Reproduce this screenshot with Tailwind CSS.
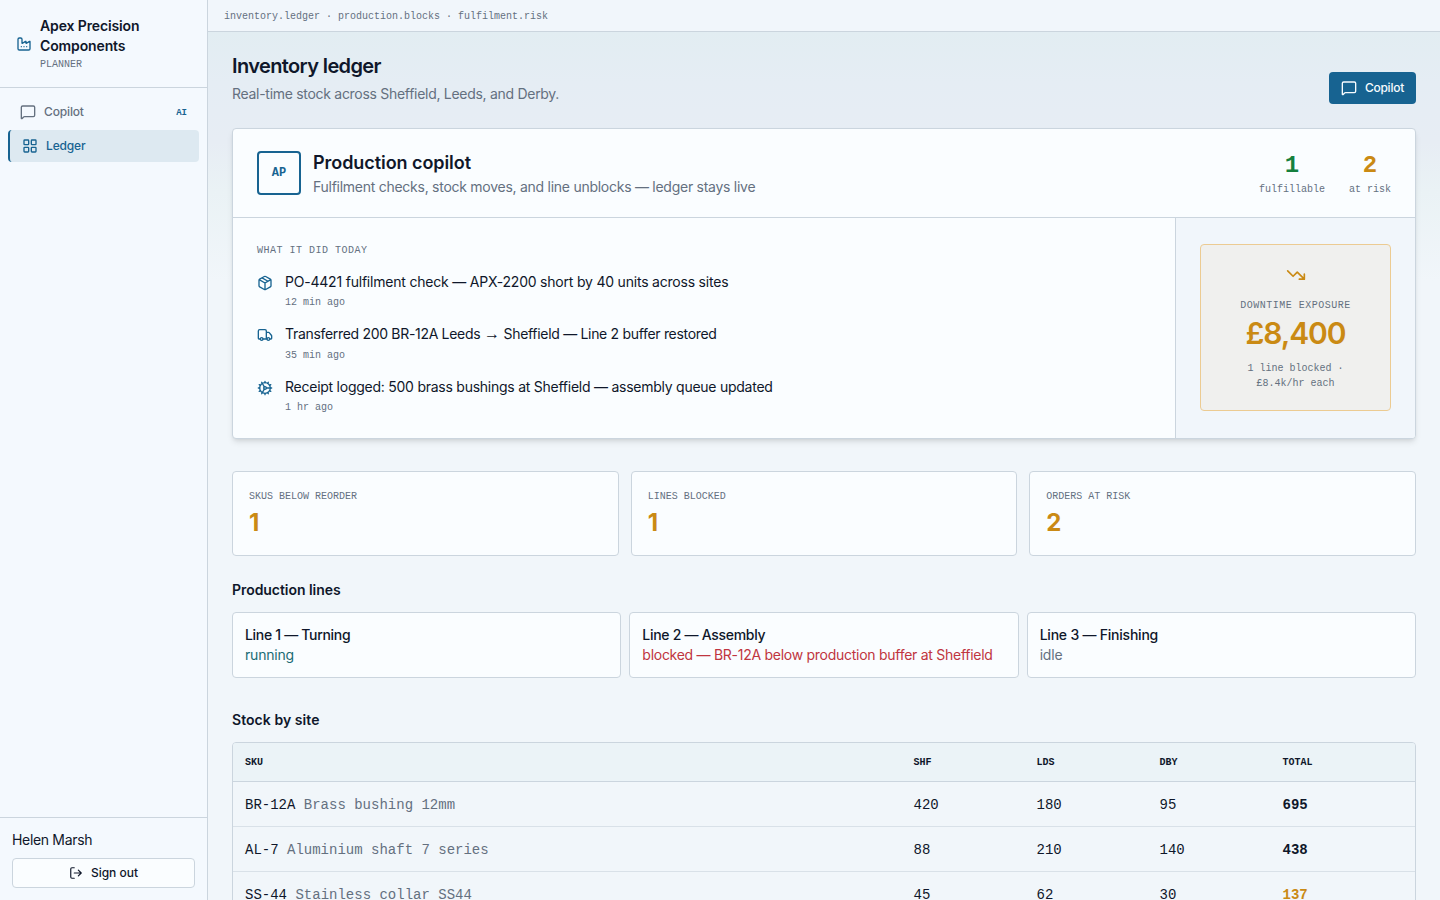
<!DOCTYPE html>
<html lang="en">
<head>
    <meta charset="UTF-8" />
    <meta name="viewport" content="width=device-width, initial-scale=1" />
    <title>Inventory ledger - Apex Precision Components</title>
    <script src="https://cdn.jsdelivr.net/npm/@tailwindcss/browser@4"></script>
</head>
<body class="h-screen overflow-hidden flex bg-[#f1f6fa] text-[#0f172a] text-sm font-['Inter','Liberation_Sans',sans-serif]">
    <aside class="w-52 shrink-0 flex flex-col bg-[#f4f9fe] border-r border-[#cbd5de]">
        <div class="flex items-center gap-2 p-4 border-b border-[#cbd5de]">
            <svg class="size-4 shrink-0 text-[#176391]" viewBox="0 0 24 24" fill="none" stroke="currentColor" stroke-width="2" stroke-linecap="round" stroke-linejoin="round"><path d="M12 16h.01M16 16h.01M8 16h.01" /><path d="M3 19a2 2 0 0 0 2 2h14a2 2 0 0 0 2-2V8.500a.5.5 0 0 0-.769-.422l-4.462 2.844A.5.5 0 0 1 15 10.500v-2a.5.5 0 0 0-.769-.422L9.770 10.922A.5.5 0 0 1 9 10.500V5a2 2 0 0 0-2-2H5a2 2 0 0 0-2 2z" /></svg>
            <div>
                <p class="font-semibold leading-5 tracking-[-0.13px]">Apex Precision<br />Components</p>
                <p class="pt-0.5 font-['Liberation_Mono',monospace] text-[10px] leading-[13px] text-[#64707f]">PLANNER</p>
            </div>
        </div>
        <nav class="flex-1 flex flex-col gap-0.5 p-2 text-xs font-medium tracking-[-0.15px]">
            <a class="flex items-center gap-2 h-8 px-3 text-[#64707f]">
                <svg class="size-4" viewBox="0 0 24 24" fill="none" stroke="currentColor" stroke-width="2" stroke-linecap="round" stroke-linejoin="round"><path d="M22 17a2 2 0 0 1-2 2H6.828a2 2 0 0 0-1.414.586l-2.202 2.202A.71.71 0 0 1 2 21.286V5a2 2 0 0 1 2-2h16a2 2 0 0 1 2 2z" /></svg>
                Copilot
                <span class="ml-auto pt-0.5 font-['Liberation_Mono',monospace] text-[9px] font-bold tracking-normal text-[#176391]">AI</span>
            </a>
            <a class="flex items-center gap-2 h-8 px-3 rounded border-l-2 border-[#176391] bg-[#dde9f1] text-[#176391]">
                <svg class="size-4" viewBox="0 0 24 24" fill="none" stroke="currentColor" stroke-width="2" stroke-linecap="round" stroke-linejoin="round"><rect width="7" height="7" x="3" y="3" rx="1" /><rect width="7" height="7" x="14" y="3" rx="1" /><rect width="7" height="7" x="14" y="14" rx="1" /><rect width="7" height="7" x="3" y="14" rx="1" /></svg>
                Ledger
            </a>
        </nav>
        <div class="p-3 border-t border-[#cbd5de]">
            <p class="leading-5 tracking-[-0.33px]">Helen Marsh</p>
            <button class="mt-2 w-full h-[30px] flex items-center justify-center gap-2 rounded border border-[#cbd5de] bg-[#fafdff] text-xs font-medium">
                <svg class="size-3.5" viewBox="0 0 24 24" fill="none" stroke="currentColor" stroke-width="2" stroke-linecap="round" stroke-linejoin="round"><path d="m16 17 5-5-5-5M21 12H9M9 21H5a2 2 0 0 1-2-2V5a2 2 0 0 1 2-2h4" /></svg>
                Sign out
            </button>
        </div>
    </aside>

    <div class="flex-1 min-w-0 flex flex-col">
        <header class="h-8 shrink-0 flex items-center px-4 pt-px border-b border-[#cbd5de] bg-[#f1f6fb] font-['Liberation_Mono',monospace] text-[10px] leading-[15px] text-[#64707f]">
            inventory.ledger · production.blocks · fulfilment.risk
        </header>
        <main class="flex-1 min-h-0 overflow-hidden px-6 pt-5 bg-[linear-gradient(to_bottom,#e2edf2_0px,#e5edf4_50px,#e7edf4_110px,#eaf2f5_160px,#f1f6fa_250px)]">
            <div class="flex items-end justify-between">
                <div>
                    <h1 class="text-xl leading-7 font-semibold tracking-[-0.62px]">Inventory ledger</h1>
                    <p class="mt-1 leading-5 tracking-[-0.29px] text-[#64707f]">Real-time stock across Sheffield, Leeds, and Derby.</p>
                </div>
                <button class="flex items-center gap-2 h-8 px-3 rounded bg-[#176391] text-[#f8fcff] text-xs font-medium tracking-[-0.25px]">
                    <svg class="size-4" viewBox="0 0 24 24" fill="none" stroke="currentColor" stroke-width="2" stroke-linecap="round" stroke-linejoin="round"><path d="M22 17a2 2 0 0 1-2 2H6.828a2 2 0 0 0-1.414.586l-2.202 2.202A.71.71 0 0 1 2 21.286V5a2 2 0 0 1 2-2h16a2 2 0 0 1 2 2z" /></svg>
                    Copilot
                </button>
            </div>

            <section class="mt-6 h-[311px] flex flex-col overflow-hidden rounded border border-[#cbd5de] bg-[#fafdff] shadow-md">
                <div class="h-[89px] shrink-0 flex items-center justify-between px-6 border-b border-[#cbd5de]">
                    <div class="flex items-center gap-3">
                        <div class="size-11 flex items-center justify-center rounded border-2 border-[#176391] font-['Liberation_Mono',monospace] text-xs font-bold text-[#176391]">AP</div>
                        <div>
                            <h2 class="text-lg leading-7 font-semibold tracking-[-0.06px]">Production copilot</h2>
                            <p class="leading-5 tracking-[-0.265px] text-[#64707f]">Fulfilment checks, stock moves, and line unblocks — ledger stays live</p>
                        </div>
                    </div>
                    <div class="flex gap-6 text-center font-['Liberation_Mono',monospace]">
                        <div>
                            <p class="text-2xl leading-8 font-bold text-[#15803d]">1</p>
                            <p class="text-[10px] leading-[15px] text-[#64707f]">fulfillable</p>
                        </div>
                        <div>
                            <p class="text-2xl leading-8 font-bold text-[#ca8a14]">2</p>
                            <p class="text-[10px] leading-[15px] text-[#64707f]">at risk</p>
                        </div>
                    </div>
                </div>
                <div class="flex-1 flex">
                    <div class="flex-1 p-6">
                        <p class="pt-0.5 font-['Liberation_Mono',monospace] text-[10px] leading-[13px] tracking-[0.5px] text-[#64707f]">WHAT IT DID TODAY</p>
                        <ul class="mt-4 flex flex-col gap-4">
                            <li class="flex gap-3">
                                <svg class="mt-0.5 size-4 shrink-0 text-[#176391]" viewBox="0 0 24 24" fill="none" stroke="currentColor" stroke-width="2" stroke-linecap="round" stroke-linejoin="round"><path d="M11 21.730a2 2 0 0 0 2 0l7-4A2 2 0 0 0 21 16V8a2 2 0 0 0-1-1.730l-7-4a2 2 0 0 0-2 0l-7 4A2 2 0 0 0 3 8v8a2 2 0 0 0 1 1.730zM12 22V12M3.290 7 12 12l8.710-5M7.500 4.270l9 5.150" /></svg>
                                <div>
                                    <p class="leading-[18px] tracking-[-0.21px]">PO-4421 fulfilment check — APX-2200 short by 40 units across sites</p>
                                    <p class="pt-[5.25px] font-['Liberation_Mono',monospace] text-[10px] leading-[13px] text-[#64707f]">12 min ago</p>
                                </div>
                            </li>
                            <li class="flex gap-3">
                                <svg class="mt-0.5 size-4 shrink-0 text-[#176391]" viewBox="0 0 24 24" fill="none" stroke="currentColor" stroke-width="2" stroke-linecap="round" stroke-linejoin="round"><path d="M14 18V6a2 2 0 0 0-2-2H4a2 2 0 0 0-2 2v11a1 1 0 0 0 1 1h2M15 18H9M19 18h2a1 1 0 0 0 1-1v-3.650a1 1 0 0 0-.22-.624l-3.480-4.350A1 1 0 0 0 17.520 8H14" /><circle cx="17" cy="18" r="2" /><circle cx="7" cy="18" r="2" /></svg>
                                <div>
                                    <p class="leading-[18px] tracking-[-0.31px]">Transferred 200 BR-12A Leeds <span class="font-['Liberation_Sans',sans-serif] text-base leading-[0] tracking-normal">→</span> Sheffield — Line 2 buffer restored</p>
                                    <p class="pt-[5.25px] font-['Liberation_Mono',monospace] text-[10px] leading-[13px] text-[#64707f]">35 min ago</p>
                                </div>
                            </li>
                            <li class="flex gap-3">
                                <svg class="mt-0.5 size-4 shrink-0 text-[#176391]" viewBox="0 0 24 24" fill="none" stroke="currentColor" stroke-width="2" stroke-linecap="round" stroke-linejoin="round"><path d="M11 10.270 7 3.340M11 13.730l-4 6.930M12 22v-2M12 2v2M14 12h8M17 20.660l-1-1.730M17 3.340l-1 1.730M2 12h2M20.660 17l-1.730-1M20.660 7l-1.730 1M3.340 17l1.730-1M3.340 7l1.730 1" /><circle cx="12" cy="12" r="2" /><circle cx="12" cy="12" r="8" /></svg>
                                <div>
                                    <p class="leading-[18px] tracking-[-0.25px]">Receipt logged: 500 brass bushings at Sheffield — assembly queue updated</p>
                                    <p class="pt-[5.25px] font-['Liberation_Mono',monospace] text-[10px] leading-[13px] text-[#64707f]">1 hr ago</p>
                                </div>
                            </li>
                        </ul>
                    </div>
                    <div class="w-60 shrink-0 flex flex-col justify-center px-6 pb-px border-l border-[#cbd5de] bg-[#f1f6fb]">
                        <div class="flex flex-col items-center px-5 pt-5 pb-[19px] rounded border border-[#eccb92] bg-[#f0f0ee] text-center">
                            <svg class="size-5 text-[#ca8a14]" viewBox="0 0 24 24" fill="none" stroke="currentColor" stroke-width="2" stroke-linecap="round" stroke-linejoin="round"><path d="M16 17h6v-6M22 17l-8.500-8.500-5 5L2 7" /></svg>
                            <p class="mt-3 pt-0.5 font-['Liberation_Mono',monospace] text-[10px] leading-[13px] tracking-[0.5px] text-[#64707f]">DOWNTIME EXPOSURE</p>
                            <p class="mt-[3px] text-3xl leading-9 font-semibold tracking-[-1.1px] text-[#ca8a14]">£8,400</p>
                            <p class="mt-2.5 font-['Liberation_Mono',monospace] text-[10px] leading-[15px] text-[#64707f]">1 line blocked ·<br />£8.4k/hr each</p>
                        </div>
                    </div>
                </div>
            </section>

            <section class="mt-8 grid grid-cols-3 gap-3">
                <div class="p-4 rounded border border-[#cbd5de] bg-[#fafdff]">
                    <p class="pt-0.5 font-['Liberation_Mono',monospace] text-[10px] leading-[13px] text-[#64707f]">SKUS BELOW REORDER</p>
                    <p class="mt-1 text-2xl leading-8 font-bold text-[#ca8a14]">1</p>
                </div>
                <div class="p-4 rounded border border-[#cbd5de] bg-[#fafdff]">
                    <p class="pt-0.5 font-['Liberation_Mono',monospace] text-[10px] leading-[13px] text-[#64707f]">LINES BLOCKED</p>
                    <p class="mt-1 text-2xl leading-8 font-bold text-[#ca8a14]">1</p>
                </div>
                <div class="p-4 rounded border border-[#cbd5de] bg-[#fafdff]">
                    <p class="pt-0.5 font-['Liberation_Mono',monospace] text-[10px] leading-[13px] text-[#64707f]">ORDERS AT RISK</p>
                    <p class="mt-1 text-2xl leading-8 font-bold text-[#ca8a14]">2</p>
                </div>
            </section>

            <section class="mt-6">
                <h2 class="leading-5 font-semibold tracking-[-0.05px]">Production lines</h2>
                <div class="mt-3 grid grid-cols-3 gap-2 leading-5">
                    <div class="p-3 rounded border border-[#cbd5de] bg-[#fafdff]">
                        <p class="font-medium tracking-[-0.31px]">Line 1 — Turning</p>
                        <p class="tracking-[-0.2px] text-[#1a6b74]">running</p>
                    </div>
                    <div class="p-3 rounded border border-[#cbd5de] bg-[#fafdff]">
                        <p class="font-medium tracking-[-0.29px]">Line 2 — Assembly</p>
                        <p class="tracking-[-0.27px] whitespace-nowrap text-[#c03540]">blocked — BR-12A below production buffer at Sheffield</p>
                    </div>
                    <div class="p-3 rounded border border-[#cbd5de] bg-[#fafdff]">
                        <p class="font-medium tracking-[-0.22px]">Line 3 — Finishing</p>
                        <p class="tracking-[-0.2px] text-[#64707f]">idle</p>
                    </div>
                </div>
            </section>

            <section class="mt-8">
                <h2 class="leading-5 font-semibold tracking-[0.06px]">Stock by site</h2>
                <div class="mt-3 overflow-hidden rounded border border-[#cbd5de] font-['Liberation_Mono',monospace] leading-5">
                    <div class="grid grid-cols-[668.5px_123px_123px_123px_1fr] *:px-3 py-[11.5px] border-b border-[#cbd5de] bg-[#ebf3f7] text-[10px] leading-[15px] font-bold">
                        <span>SKU</span><span>SHF</span><span>LDS</span><span>DBY</span><span>TOTAL</span>
                    </div>
                    <div class="grid grid-cols-[668.5px_123px_123px_123px_1fr] *:px-3 pt-[13px] pb-[11px] border-b border-[#d9e1e8]">
                        <p>BR-12A <span class="text-[#64707f]">Brass bushing 12mm</span></p><p>420</p><p>180</p><p>95</p><p class="font-bold">695</p>
                    </div>
                    <div class="grid grid-cols-[668.5px_123px_123px_123px_1fr] *:px-3 pt-[13px] pb-[11px] border-b border-[#d9e1e8]">
                        <p>AL-7 <span class="text-[#64707f]">Aluminium shaft 7 series</span></p><p>88</p><p>210</p><p>140</p><p class="font-bold">438</p>
                    </div>
                    <div class="grid grid-cols-[668.5px_123px_123px_123px_1fr] *:px-3 pt-[13px] pb-[11px] border-b border-[#d9e1e8]">
                        <p>SS-44 <span class="text-[#64707f]">Stainless collar SS44</span></p><p>45</p><p>62</p><p>30</p><p class="font-bold text-[#ca8a14]">137</p>
                    </div>
                </div>
            </section>
        </main>
    </div>
</body>
</html>
